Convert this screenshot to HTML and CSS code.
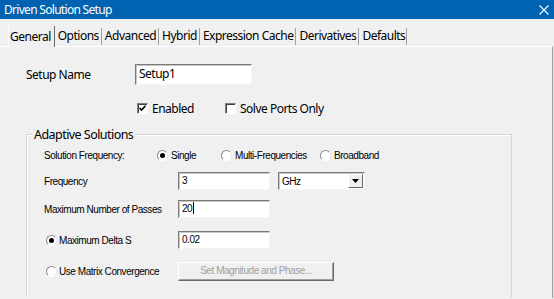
FILE: index.html
```html
<!DOCTYPE html>
<html lang="en">
<head>
    <meta charset="UTF-8">
    <title>Driven Solution Setup</title>
    <link rel="stylesheet" href="styles.css">
</head>
<body>

    <div class="titlebar">
        <span class="title">Driven Solution Setup</span>
        <svg class="close" width="10" height="10" viewBox="0 0 10 10">
            <path d="M0.5 0.5 L9.5 9.5 M9.5 0.5 L0.5 9.5" stroke="#fff" stroke-width="1.1" fill="none"/>
        </svg>
    </div>

    <!-- Tab strip -->
    <div class="tabs">
        <div class="tab active">General</div>
        <div class="tab">Options</div>
        <div class="tab">Advanced</div>
        <div class="tab">Hybrid</div>
        <div class="tab">Expression Cache</div>
        <div class="tab">Derivatives</div>
        <div class="tab">Defaults</div>
    </div>

    <div class="panel">
        <div class="row-name">
            <span class="name-label">Setup Name</span>
            <div class="edit name-edit">Setup1</div>
        </div>

        <div class="row-checks">
            <label class="check">
                <span class="box">
                    <svg width="9" height="9" viewBox="0 0 9 9"><path d="M1.5 4 L3.5 6 L7.5 1.8" stroke="#000" stroke-width="1.6" fill="none"/></svg>
                </span>
                Enabled
            </label>
            <label class="check">
                <span class="box"></span>
                Solve Ports Only
            </label>
        </div>

        <!-- Adaptive Solutions group -->
        <div class="group">
            <div class="group-title">Adaptive Solutions</div>

            <div class="row-freqtype">
                <span class="col-label short">Solution Frequency:</span>
                <span class="opt single"><span class="radio on"></span>Single</span>
                <span class="opt multi"><span class="radio"></span>Multi-Frequencies</span>
                <span class="opt"><span class="radio"></span>Broadband</span>
            </div>

            <div class="row row-freq">
                <span class="col-label">Frequency</span>
                <div class="edit">3</div>
                <div class="combo">
                    <span class="combo-text">GHz</span>
                    <span class="combo-btn">
                        <svg width="7" height="4" viewBox="0 0 7 4"><path d="M0 0 H7 L3.5 4 Z" fill="#000"/></svg>
                    </span>
                </div>
            </div>

            <div class="row row-passes">
                <span class="col-label">Maximum Number of Passes</span>
                <div class="edit">20<span class="caret"></span></div>
            </div>

            <div class="row row-delta">
                <span class="col-label"><span class="radio on"></span>Maximum Delta S</span>
                <div class="edit">0.02</div>
            </div>

            <div class="row row-matrix">
                <span class="col-label"><span class="radio"></span>Use Matrix Convergence</span>
                <div class="button disabled">Set Magnitude and Phase...</div>
            </div>
        </div>
    </div>

</body>
</html>
```

FILE: styles.css
```css
body {
    margin: 0;
    background-color: #f0f0f0;
    font-family: "Noto Sans", "Open Sans", sans-serif;
    font-size: 12px;
    letter-spacing: -0.5px;
    color: #000;
    overflow: hidden;
}

/* Window caption */
.titlebar {
    height: 19px;
    background-color: #0063b1;
    color: #fff;
    display: flex;
    align-items: center;
    justify-content: space-between;
    padding: 0 5px 0 4px;
}

.title {
    font-size: 12px;
    line-height: 19px;
    letter-spacing: -0.7px;
}

.close {
    display: block;
}

/* Tabs */
.tabs {
    display: flex;
    align-items: flex-end;
    height: 22px;
    margin-top: 5px;
    padding-left: 8px;
}

.tab {
    height: 17px;
    line-height: 16px;
    padding: 0 2px 0 3px;
    border-right: 1px solid #a0a0a0;
    margin-bottom: 1px;
}

.tab:last-child {
    padding-right: 1px;
}

.tab.active {
    height: 21px;
    line-height: 22px;
    padding: 0 3px 0 1px;
    margin-bottom: -1px;
    border-left: 1px solid #fff;
    border-right: 1px solid #696969;
    background-color: #f0f0f0;
    position: relative;
    z-index: 1;
}

.panel {
    box-sizing: border-box;
    height: 252px;
    margin-right: 1px;
    border-top: 1px solid #fff;
    border-right: 1px solid #a0a0a0;
    box-shadow: 1px 0 0 #e3e3e3;
    padding: 17px 0 0 26px;
    overflow: hidden;
}

.row-name {
    display: flex;
    align-items: center;
}

.name-label {
    width: 109px;
}

.edit {
    box-sizing: border-box;
    width: 92px;
    height: 18px;
    background-color: #fff;
    border: 1px solid;
    border-color: #7a7a7a #f5f5f5 #f5f5f5 #7a7a7a;
    box-shadow: inset 1px 1px 0 #c8c8c8;
    padding: 0 3px;
    line-height: 15px;
}

.name-edit {
    width: 117px;
    height: 21px;
    line-height: 17px;
    font-size: 12px;
}

.row-checks {
    display: flex;
    margin: 15px 0 0 111px;
    height: 16px;
    align-items: center;
}

.check {
    display: flex;
    align-items: center;
    margin-right: 31px;
}

.box {
    box-sizing: border-box;
    width: 11px;
    height: 11px;
    background-color: #fff;
    border: 1px solid;
    border-color: #808080 #fff #fff #808080;
    box-shadow: inset 1px 1px 0 #404040;
    margin-right: 4px;
    display: flex;
    align-items: center;
    justify-content: center;
}

.box svg {
    display: block;
}

/* Group box */
.group {
    box-sizing: border-box;
    width: 486px;
    height: 170px;
    margin-top: 18px;
    border: 1px solid #d5d5d5;
    border-bottom: none;
    box-shadow: inset 1px 1px 0 #fff;
    padding-left: 17px;
    font-family: "Liberation Sans", Arial, sans-serif;
    font-size: 10px;
    letter-spacing: -0.45px;
}

.group-title {
    display: table;
    margin: -9px 0 0 -12px;
    padding: 0 2px;
    background-color: #f0f0f0;
    font-family: "Noto Sans", "Open Sans", sans-serif;
    font-size: 12.5px;
    letter-spacing: -0.55px;
    line-height: 17px;
}

.row-freqtype {
    display: flex;
    align-items: center;
    height: 18px;
    margin-top: 3px;
}

.col-label {
    display: flex;
    align-items: center;
    width: 134px;
    flex: none;
}

.col-label.short {
    width: 113px;
}

.opt {
    display: flex;
    align-items: center;
}

.opt.single {
    width: 64px;
}

.opt.multi {
    width: 99px;
}

.radio {
    box-sizing: border-box;
    width: 11px;
    height: 11px;
    border-radius: 50%;
    background-color: #fff;
    border: 1px solid;
    border-color: #8a8a8a #e8e8e8 #ffffff #8a8a8a;
    margin-right: 3px;
    display: flex;
    align-items: center;
    justify-content: center;
}

.radio.on::after {
    content: "";
    width: 5px;
    height: 5px;
    border-radius: 50%;
    background-color: #000;
}

.row-delta .radio,
.row-matrix .radio {
    margin-left: 2px;
    margin-right: 2px;
}

.row {
    display: flex;
    align-items: center;
}

.row-freq {
    margin-top: 8px;
}

.row-passes {
    margin-top: 10px;
}

.row-delta {
    margin-top: 13px;
}

.row-matrix {
    margin-top: 13px;
}

.caret {
    display: inline-block;
    width: 1px;
    height: 12px;
    background-color: #000;
    vertical-align: -2px;
    margin-left: 1px;
}

/* Drop-down list */
.combo {
    box-sizing: border-box;
    width: 87px;
    height: 18px;
    margin-left: 8px;
    background-color: #fff;
    border: 1px solid;
    border-color: #7a7a7a #f5f5f5 #f5f5f5 #7a7a7a;
    box-shadow: inset 1px 1px 0 #c8c8c8;
    display: flex;
    align-items: center;
    justify-content: space-between;
    padding-left: 3px;
}

.combo-btn {
    box-sizing: border-box;
    width: 15px;
    height: 14px;
    margin-right: 1px;
    background-color: #f0f0f0;
    border: 1px solid;
    border-color: #fff #696969 #696969 #fff;
    display: flex;
    align-items: center;
    justify-content: center;
}

.combo-btn svg {
    display: block;
}

.button {
    box-sizing: border-box;
    width: 156px;
    height: 19px;
    background-color: #f0f0f0;
    border: 1px solid;
    border-color: #fff #696969 #696969 #fff;
    box-shadow: inset -1px -1px 0 #a0a0a0;
    text-align: center;
    line-height: 16px;
}

.button.disabled {
    color: #a0a0a0;
}
```
